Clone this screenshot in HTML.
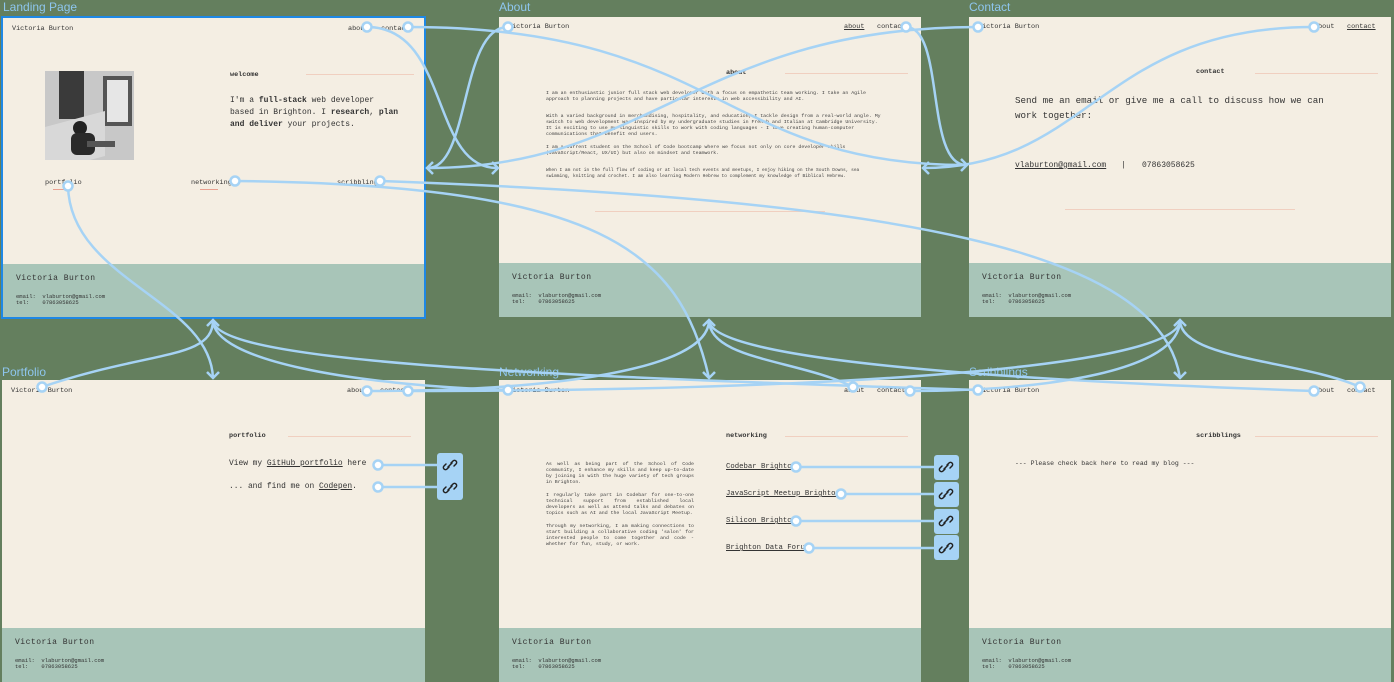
<!DOCTYPE html>
<html><head><meta charset="utf-8"><style>
*{margin:0;padding:0;box-sizing:border-box}
body{width:1394px;height:682px;background:#647f5e;position:relative;overflow:hidden;font-family:"Liberation Mono",monospace;color:#333}
.t{position:absolute;font-family:"Liberation Sans",sans-serif;font-size:12px;color:#8ec6ee}
.f{position:absolute;background:#f4eee3;overflow:hidden}
.ft{position:absolute;left:0;right:0;bottom:0;height:54px;background:#a8c5b8}
.a{position:absolute;white-space:nowrap;line-height:1}
.e{white-space:pre}
.ln{position:absolute;height:1px;background:#f0cfc0}
.u{text-decoration:underline}
.p{position:absolute;font-size:4.9px;line-height:6px;color:#444}
.p div{margin-bottom:7px}
.lk{position:absolute;background:#a6d3f5;border-radius:3px}
</style></head><body>
<div class="t" style="left:3px;top:0">Landing Page</div>
<div class="t" style="left:499px;top:0">About</div>
<div class="t" style="left:969px;top:0">Contact</div>
<div class="t" style="left:2px;top:365px">Portfolio</div>
<div class="t" style="left:499px;top:365px">Networking</div>
<div class="t" style="left:969px;top:365px">Scribblings</div>

<!-- Landing -->
<div class="f" style="left:1px;top:16px;width:425px;height:303px;border:2px solid #1e88e5">
 <div class="a" style="left:9px;top:8px;font-size:6.8px">Victoria Burton</div>
 <div class="a" style="left:345px;top:8px;font-size:6.8px">about</div>
 <div class="a" style="left:378px;top:8px;font-size:6.8px">contact</div>
 <div style="position:absolute;left:42px;top:53px;width:89px;height:89px;background:#bdbdbd;overflow:hidden">
  <div style="position:absolute;left:0;top:0;width:89px;height:89px;background:#c8c8c8"></div>
  <div style="position:absolute;left:14px;top:0;width:25px;height:48px;background:#3a3a3a"></div>
  <div style="position:absolute;left:58px;top:5px;width:29px;height:50px;background:#e6e6e6;border:4px solid #555"></div>
  <div style="position:absolute;left:0;top:48px;width:60px;height:45px;background:#d8d8d8;transform:skewY(-15deg)"></div>
  <div style="position:absolute;left:28px;top:50px;width:14px;height:14px;border-radius:50%;background:#222"></div>
  <div style="position:absolute;left:26px;top:62px;width:24px;height:22px;background:#2a2a2a;border-radius:6px"></div>
  <div style="position:absolute;left:42px;top:70px;width:28px;height:6px;background:#555"></div>
 </div>
 <div class="a" style="left:227px;top:54px;font-size:6.8px;font-weight:bold">welcome</div>
 <div class="ln" style="left:303px;top:56px;width:108px"></div>
 <div class="a" style="left:227px;top:77px;font-size:8px;line-height:12px;white-space:normal;width:170px">I'm a <b>full-stack</b> web developer based in Brighton. I <b>research</b>, <b>plan and deliver</b> your projects.</div>
 <div class="a" style="left:42px;top:162px;font-size:6.8px">portfolio</div>
 <div class="a" style="left:188px;top:162px;font-size:6.8px">networking</div>
 <div class="a" style="left:334px;top:162px;font-size:6.8px">scribbling</div>
 <div class="ln" style="left:50px;top:171px;width:18px;background:#e8a090"></div>
 <div class="ln" style="left:197px;top:171px;width:18px;background:#e8a090"></div>
 <div class="ft" style="height:53px"><div class="a" style="left:13px;top:11px;font-size:8px;letter-spacing:.5px">Victoria Burton</div>
 <div class="a e" style="left:13px;top:30px;font-size:5.5px;line-height:6px">email:  vlaburton@gmail.com
tel:    07863058625</div></div>
</div>

<!-- About -->
<div class="f" style="left:499px;top:17px;width:422px;height:300px">
 <div class="a" style="left:9px;top:7px;font-size:6.8px">Victoria Burton</div>
 <div class="a u" style="left:345px;top:7px;font-size:6.8px">about</div>
 <div class="a" style="left:378px;top:7px;font-size:6.8px">contact</div>
 <div class="a" style="left:227px;top:53px;font-size:6.8px;font-weight:bold">about</div>
 <div class="ln" style="left:286px;top:56px;width:123px"></div>
 <div class="p" style="left:47px;top:74px;width:340px">
  <div>I am an enthusiastic junior full stack web developer with a focus on empathetic team working.  I take an Agile approach to planning projects and have particular interests in web accessibility and AI.</div>
  <div style="margin-top:11px">With a varied background in merchandising, hospitality, and education, I tackle design from a real-world angle.  My switch to web development was inspired by my undergraduate studies in French and Italian at Cambridge University.  It is exciting to use my linguistic skills to work with coding languages - I love creating human-computer communications that benefit end users.</div>
  <div>I am a current student on the School of Code bootcamp where we focus not only on core developer skills (JavaScript/React, UX/UI) but also on mindset and teamwork.</div>
  <div style="margin-top:11px;font-size:4.5px">When I am not in the full flow of coding or at local tech events and meetups, I enjoy hiking on the South Downs, sea swimming, knitting and crochet. I am also learning Modern Hebrew to complement my knowledge of Biblical Hebrew.</div>
 </div>
 <div class="ln" style="left:96px;top:194px;width:230px"></div>
 <div class="ft" style="height:54px"><div class="a" style="left:13px;top:11px;font-size:8px;letter-spacing:.5px">Victoria Burton</div>
 <div class="a e" style="left:13px;top:30px;font-size:5.5px;line-height:6px">email:  vlaburton@gmail.com
tel:    07863058625</div></div>
</div>

<!-- Contact -->
<div class="f" style="left:969px;top:17px;width:422px;height:300px">
 <div class="a" style="left:9px;top:7px;font-size:6.8px">Victoria Burton</div>
 <div class="a" style="left:345px;top:7px;font-size:6.8px">about</div>
 <div class="a u" style="left:378px;top:7px;font-size:6.8px">contact</div>
 <div class="a" style="left:227px;top:52px;font-size:6.8px;font-weight:bold">contact</div>
 <div class="ln" style="left:286px;top:56px;width:123px"></div>
 <div class="a" style="left:46px;top:76px;font-size:9.2px;line-height:15px;white-space:normal;width:330px">Send me an email or give me a call to discuss how we can work together:</div>
 <div class="a u" style="left:46px;top:145px;font-size:8px">vlaburton@gmail.com</div>
 <div class="a" style="left:152px;top:145px;font-size:8px">|</div>
 <div class="a" style="left:173px;top:145px;font-size:8px">07863058625</div>
 <div class="ln" style="left:96px;top:192px;width:230px"></div>
 <div class="ft" style="height:54px"><div class="a" style="left:13px;top:11px;font-size:8px;letter-spacing:.5px">Victoria Burton</div>
 <div class="a e" style="left:13px;top:30px;font-size:5.5px;line-height:6px">email:  vlaburton@gmail.com
tel:    07863058625</div></div>
</div>

<!-- Portfolio -->
<div class="f" style="left:2px;top:380px;width:423px;height:302px">
 <div class="a" style="left:9px;top:8px;font-size:6.8px">Victoria Burton</div>
 <div class="a" style="left:345px;top:8px;font-size:6.8px">about</div>
 <div class="a" style="left:378px;top:8px;font-size:6.8px">contact</div>
 <div class="a" style="left:227px;top:53px;font-size:6.8px;font-weight:bold">portfolio</div>
 <div class="ln" style="left:286px;top:56px;width:123px"></div>
 <div class="a" style="left:227px;top:80px;font-size:7.9px">View my <span class="u">GitHub portfolio</span> here</div>
 <div class="a" style="left:227px;top:103px;font-size:7.9px">... and find me on <span class="u">Codepen</span>.</div>
 <div class="ft" style="height:54px"><div class="a" style="left:13px;top:11px;font-size:8px;letter-spacing:.5px">Victoria Burton</div>
 <div class="a e" style="left:13px;top:30px;font-size:5.5px;line-height:6px">email:  vlaburton@gmail.com
tel:    07863058625</div></div>
</div>

<!-- Networking -->
<div class="f" style="left:499px;top:380px;width:422px;height:302px">
 <div class="a" style="left:9px;top:8px;font-size:6.8px">Victoria Burton</div>
 <div class="a" style="left:345px;top:8px;font-size:6.8px">about</div>
 <div class="a" style="left:378px;top:8px;font-size:6.8px">contact</div>
 <div class="a" style="left:227px;top:53px;font-size:6.8px;font-weight:bold">networking</div>
 <div class="ln" style="left:286px;top:56px;width:123px"></div>
 <div class="p" style="left:47px;top:82px;width:148px;text-align:justify">
  <div>As well as being part of the  School of Code community, I enhance my skills and keep up-to-date by joining in with the huge variety of tech groups in Brighton.</div>
  <div>I regularly take part in  Codebar for one-to-one technical support from established local developers as well as attend talks and debates on topics such as AI and the local JavaScript Meetup.</div>
  <div>Through my networking, I am making connections to start building a collaborative coding 'salon' for interested people to come together and code - whether for fun, study, or work.</div>
 </div>
 <div class="a u" style="left:227px;top:84px;font-size:7.3px">Codebar Brighton</div>
 <div class="a u" style="left:227px;top:111px;font-size:7.3px">JavaScript Meetup Brighton</div>
 <div class="a u" style="left:227px;top:138px;font-size:7.3px">Silicon Brighton</div>
 <div class="a u" style="left:227px;top:165px;font-size:7.3px">Brighton Data Forum</div>
 <div class="ft" style="height:54px"><div class="a" style="left:13px;top:11px;font-size:8px;letter-spacing:.5px">Victoria Burton</div>
 <div class="a e" style="left:13px;top:30px;font-size:5.5px;line-height:6px">email:  vlaburton@gmail.com
tel:    07863058625</div></div>
</div>

<!-- Scribblings -->
<div class="f" style="left:969px;top:380px;width:422px;height:302px">
 <div class="a" style="left:9px;top:8px;font-size:6.8px">Victoria Burton</div>
 <div class="a" style="left:345px;top:8px;font-size:6.8px">about</div>
 <div class="a" style="left:378px;top:8px;font-size:6.8px">contact</div>
 <div class="a" style="left:227px;top:53px;font-size:6.8px;font-weight:bold">scribblings</div>
 <div class="ln" style="left:286px;top:56px;width:123px"></div>
 <div class="a" style="left:46px;top:81px;font-size:6.5px">--- Please check back here to read my blog ---</div>
 <div class="ft" style="height:54px"><div class="a" style="left:13px;top:11px;font-size:8px;letter-spacing:.5px">Victoria Burton</div>
 <div class="a e" style="left:13px;top:30px;font-size:5.5px;line-height:6px">email:  vlaburton@gmail.com
tel:    07863058625</div></div>
</div>

<!-- link boxes -->
<div class="lk" style="left:437px;top:453px;width:26px;height:47px"></div>
<div class="lk" style="left:934px;top:455px;width:25px;height:25px"></div>
<div class="lk" style="left:934px;top:482px;width:25px;height:25px"></div>
<div class="lk" style="left:934px;top:509px;width:25px;height:25px"></div>
<div class="lk" style="left:934px;top:535px;width:25px;height:25px"></div>

<svg width="1394" height="682" style="position:absolute;left:0;top:0">
<defs>
<g id="chain"><path d="M-1,2 L-3,4 a2.1,2.1 0 0 1 -3,-3 L-4,-1 M1,-2 L3,-4 a2.1,2.1 0 0 1 3,3 L4,1 M-2,2 L2,-2" fill="none" stroke="#222" stroke-width="1.5" stroke-linecap="round"/></g>
</defs>
<use href="#chain" x="450" y="465"/><use href="#chain" x="450" y="488"/>
<use href="#chain" x="946" y="467"/><use href="#chain" x="946" y="494"/><use href="#chain" x="946" y="521"/><use href="#chain" x="946" y="548"/>
<g fill="none" stroke="#a6d3f5" stroke-width="2.5">
<path d="M367,27 C450,27 430,168 497,168"/>
<path d="M408,27 C720,27 720,165 966,165"/>
<path d="M508,27 C460,27 470,168 428,168"/>
<path d="M906,27 C945,27 925,165 966,165"/>
<path d="M978,27 C700,27 650,168 428,168"/>
<path d="M1314,27 C1100,27 1090,168 923,168"/>
<path d="M235,181 C600,185 680,250 709,378"/>
<path d="M380,181 C900,200 1160,250 1180,378"/>
<path d="M68,186 C70,280 210,300 213,378"/>
<path d="M42,387 C150,350 213,360 213,320"/>
<path d="M508,390 C350,385 213,360 213,320"/>
<path d="M978,390 C500,375 213,360 213,320"/>
<path d="M367,391 C550,391 709,370 709,320"/>
<path d="M853,387 C800,360 709,360 709,320"/>
<path d="M1314,391 C1000,380 709,360 709,320"/>
<path d="M408,391 C800,391 1180,370 1180,320"/>
<path d="M910,391 C1050,391 1180,370 1180,320"/>
<path d="M1360,387 C1300,360 1180,360 1180,320"/>
<path d="M378,465 L437,465 M378,487 L437,487"/>
<path d="M796,467 L934,467 M841,494 L934,494 M796,521 L934,521 M809,548 L934,548"/>
<path d="M492,162 L498,168 L492,174 M433,162 L427,168 L433,174 M961,159 L967,165 L961,171 M929,162 L923,168 L929,174 M207,372 L213,378 L219,372 M703,372 L709,378 L715,372 M1174,372 L1180,378 L1186,372 M207,326 L213,320 L219,326 M703,326 L709,320 L715,326 M1174,326 L1180,320 L1186,326"/>
</g>
<g fill="#fff" stroke="#a6d3f5" stroke-width="2.5">
<circle cx="367" cy="27" r="4.5"/><circle cx="408" cy="27" r="4.5"/><circle cx="508" cy="27" r="4.5"/><circle cx="906" cy="27" r="4.5"/>
<circle cx="978" cy="27" r="4.5"/><circle cx="1314" cy="27" r="4.5"/>
<circle cx="235" cy="181" r="4.5"/><circle cx="380" cy="181" r="4.5"/><circle cx="68" cy="186" r="4.5"/>
<circle cx="42" cy="387" r="4.5"/><circle cx="367" cy="391" r="4.5"/><circle cx="408" cy="391" r="4.5"/>
<circle cx="508" cy="390" r="4.5"/><circle cx="853" cy="387" r="4.5"/><circle cx="910" cy="391" r="4.5"/>
<circle cx="978" cy="390" r="4.5"/><circle cx="1314" cy="391" r="4.5"/><circle cx="1360" cy="387" r="4.5"/>
<circle cx="378" cy="465" r="4.5"/><circle cx="378" cy="487" r="4.5"/>
<circle cx="796" cy="467" r="4.5"/><circle cx="841" cy="494" r="4.5"/><circle cx="796" cy="521" r="4.5"/><circle cx="809" cy="548" r="4.5"/>
</g>
</svg>
</body></html>
